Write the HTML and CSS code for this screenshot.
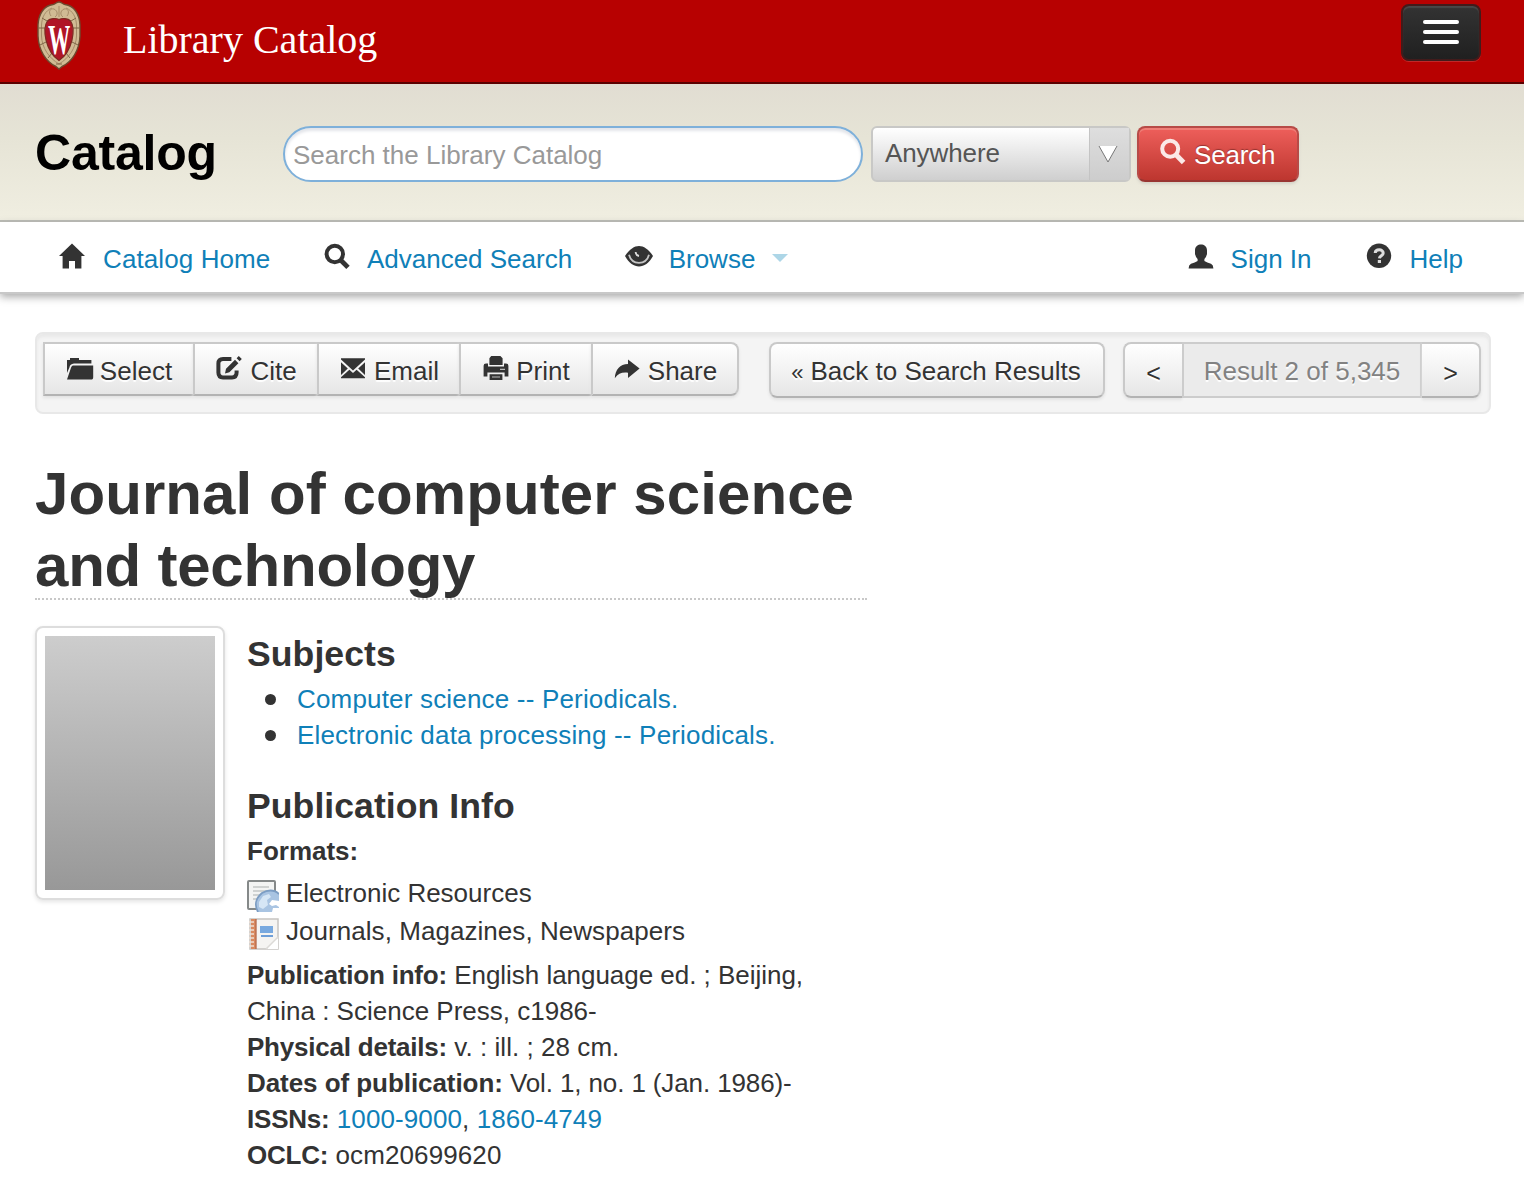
FILE: index.html
```html
<!DOCTYPE html>
<html lang="en">
<head>
<meta charset="utf-8">
<title>Library Catalog</title>
<link rel="stylesheet" href="styles.css">
</head>
<body>
<header class="topbar">
  <svg class="crest" viewBox="0 0 44 70" width="44" height="70">
    <path d="M22 2C24.500 2 25.500 4 28 4.500C37 5.500 42.500 14 43 25V36C42.500 50 35 62 25 66.500L22 69L19 66.500C9 62 1.500 50 1 36V25C1.500 14 7 5.500 16 4.500C18.500 4 19.500 2 22 2Z" fill="#d0bb94" stroke="#6e4a30" stroke-width="1.400"/>
    <path d="M22 6V17M15 8C8 11 5 17 4.500 25V36C5 48 12 58 22 64C32 58 39 48 39.500 36V25C39 17 36 11 29 8M14 16C11 12 13 8 17 9C21 11 21 15 18 17M30 16C33 12 31 8 27 9C23 11 23 15 26 17" fill="none" stroke="#a58c69" stroke-width="1"/>
    <path d="M1.500 28H8M36 28H42.500M3 45L9 42M41 45L35 42M11 58L15 53M33 58L29 53M19 64H25M5 18L10 21M39 18L34 21" stroke="#7d6547" stroke-width="1"/>
    <path d="M22 19.500C25 18 31 18 33.500 21C36.500 25 36.500 33 35 40C33 48 29 56 22 60.500C15 56 11 48 9 40C7.500 33 7.500 25 10.500 21C13 18 19 18 22 19.500Z" fill="#b01526" stroke="#7d2a22" stroke-width="1.200"/>
    <text class="crest-letter" transform="translate(22 53.500) scale(.53 1)" text-anchor="middle">W</text>
  </svg>
  <span class="site-name">Library Catalog</span>
  <button class="menu-button" aria-label="Menu"><i></i><i></i><i></i></button>
</header>

<section class="search-band">
  <h2 class="brand">Catalog</h2>
  <input class="search-input" type="text" placeholder="Search the Library Catalog">
  <div class="field-select"><span class="field-name">Anywhere</span><span class="field-arrow"><svg width="20" height="18" viewBox="0 0 20 18"><path d="M1 1H19L10 17Z" fill="#fff"/><path d="M1 1L10 17L19 1" fill="none" stroke="#777" stroke-width="1"/></svg></span></div>
  <button class="search-button"><svg class="icon" viewBox="0 0 14 14"><circle cx="5.600" cy="5.400" r="4" fill="none" stroke="currentColor" stroke-width="2"/><path d="M8.500 8.400L12.300 12.300" stroke="currentColor" stroke-width="2.500"/></svg><span>Search</span></button>
</section>

<nav class="nav">
  <a class="nav-home"><svg class="icon" viewBox="0 0 14 14"><path d="M7.500 .2L14 6.500H12.200V12.700H9V9H6V12.700H2.800V6.500H1Z" fill="currentColor"/></svg><span>Catalog Home</span></a>
  <a class="nav-advanced"><svg class="icon" viewBox="0 0 14 14"><circle cx="5.900" cy="5.500" r="4.100" fill="none" stroke="currentColor" stroke-width="2"/><path d="M8.800 8.500L12.500 12.200" stroke="currentColor" stroke-width="2.400"/></svg><span>Advanced Search</span></a>
  <a class="nav-browse"><svg class="icon" viewBox="0 0 14 14"><path d="M0 6.500C2.300 3 4.700 1.500 7 1.500S11.700 3 14 6.500C12 10.200 9.500 11.700 7 11.700S2 10.200 0 6.500Z" fill="currentColor"/><path d="M2 5.900C2.700 8.500 4.700 9.900 7 9.900S11.300 8.500 12 5.900" fill="none" stroke="#c4c4c4" stroke-width=".9"/><path d="M5.300 4.500Q5.400 6.200 7 6.500" stroke="#ddd" fill="none" stroke-width=".9"/></svg><span>Browse</span><b class="caret"></b></a>
  <a class="nav-signin"><svg class="icon" viewBox="0 0 14 14"><path d="M4 3.700C4 -.2 10 -.2 10 3.700V5.500Q9.500 7.500 8.700 8V9Q10 9.900 12 10.400Q13.200 11 13.200 12.700H.8Q.8 11 2 10.400Q4 9.900 5.300 9V8Q4.500 7.500 4 5.500Z" fill="currentColor"/></svg><span>Sign In</span></a>
  <a class="nav-help"><svg class="icon" viewBox="0 0 14 14"><circle cx="6.500" cy="6.400" r="6.100" fill="currentColor"/><path d="M4.600 5C4.700 2.900 8.600 2.900 8.600 5C8.600 6.400 6.800 6.300 6.700 7.700" fill="none" stroke="#ddd" stroke-width="1.500"/><rect x="5.900" y="8.500" width="1.600" height="1.500" fill="#ddd"/></svg><span>Help</span></a>
</nav>

<main class="page">
  <div class="toolbar">
    <div class="group actions">
      <button class="btn b-select"><svg class="icon" viewBox="0 0 14 14"><path d="M.5 9V2.500H2V1.500H6.500V2.500H12.700V4.300H4C2.500 4.500 2 5 1.700 6.300ZM.5 12.200L2.500 6.400C2.800 5.500 3.100 5.200 4 5.200H13.600V11C13.600 12 13.300 12.300 12.500 12.300Z" fill="currentColor"/></svg><span>Select</span></button>
      <button class="btn b-cite"><svg class="icon" viewBox="0 0 14 14"><path d="M8.200 2H4Q1.700 2 1.700 4.300V8.800Q1.700 11.200 4 11.200H8.500Q10.800 11.200 10.800 8.800V7.700" fill="none" stroke="currentColor" stroke-width="2"/><path d="M5 9.200L5.500 6.900L10 2.400L11.700 4.100L7.200 8.600ZM10.800 1.600L11.900.5L13.400 2L12.300 3.100Z" fill="currentColor"/></svg><span>Cite</span></button>
      <button class="btn b-email"><svg class="icon" viewBox="0 0 14 14"><path d="M1 1.600H13V2.200L7 7.700L1 2.200ZM1 3.600L4.400 6.700L1 10ZM13 3.600V10L9.600 6.700ZM1 11.600V11.100L5.200 7.400L7 9L8.800 7.400L13 11.100V11.600Z" fill="currentColor"/></svg><span>Email</span></button>
      <button class="btn b-print"><svg class="icon" viewBox="0 0 14 14"><path d="M4.600.5H9.200L10.300 1.600V5H3.700V1.600ZM.8 5.400Q.8 4.300 2 4.300H3V5.700H11V4.300H12Q13.200 4.300 13.200 5.400V10.700H11.300V8.700H2.700V10.700H.8ZM3.800 9.600H10.200V12.500H3.800Z" fill="currentColor"/><path d="M9 7.200H11.500M5 11H9" stroke="#bbb" stroke-width=".6"/></svg><span>Print</span></button>
      <button class="btn b-share"><svg class="icon" viewBox="0 0 14 14"><path d="M7.500 2.200L13.300 6.700L7.500 11.500V8.900C4.500 8.500 2.700 9.300.9 11.600C1.100 7.500 3.500 4.500 7.500 4.500Z" fill="currentColor"/></svg><span>Share</span></button>
    </div>
    <button class="btn b-back"><span><small>«</small> Back to Search Results</span></button>
    <div class="group pager"><button class="btn b-prev">&lt;</button><span class="btn count">Result 2 of 5,345</span><button class="btn b-next">&gt;</button></div>
  </div>

  <h1 class="title">Journal of computer science<br><span>and technology</span></h1>

  <div class="record">
    <div class="cover"><div class="cover-fill"></div></div>
    <div class="details">
      <h3>Subjects</h3>
      <ul class="subjects">
        <li><a>Computer science -- Periodicals.</a></li>
        <li><a>Electronic data processing -- Periodicals.</a></li>
      </ul>
      <h3>Publication Info</h3>
      <div class="formats-label"><b>Formats:</b></div>
      <div class="format">
        <svg width="32" height="32" viewBox="0 0 32 32"><rect x="1" y="1" width="27" height="28" rx="1" fill="#f3f4f3" stroke="#858989" stroke-width="2"/><path d="M6 7H22M6 11H20M6 15H16M6 19H12" stroke="#c3c6c6" stroke-width="1.500"/><path d="M32 14C27 9 20 10 15 13C9 18 7 25 11 32H32Z" fill="#a9c4e2"/><path d="M11 32C7 25 9 18 15 13C20 10 27 9 32 14" fill="none" stroke="#7c9dc3" stroke-width="1.800"/><path d="M12 22L16 16L22 14L24 17L20 20L21 25L16 29L12 27Z" fill="#d6e6f5"/><path d="M25 20L32 21V27L29 25L25 26L22 24ZM26 28H32V32H25Z" fill="#fff"/></svg>
        <span>Electronic Resources</span>
      </div>
      <div class="format format-journal">
        <svg width="32" height="32" viewBox="0 0 32 32"><path d="M3 1H31V31H3Z" fill="#f5f4f2" stroke="#c6c4c1" stroke-width="1.500"/><path d="M4 1H9V31H4Z" fill="#d98a60"/><path d="M9 1V31" stroke="#b5694a" stroke-width="1.300"/><path d="M2 4H7M2 8H7M2 12H7M2 16H7M2 20H7M2 24H7M2 28H7" stroke="#eee0d4" stroke-width="1.500"/><rect x="13" y="8" width="13" height="7" fill="#79a9df"/><path d="M14 18H26" stroke="#6f9fd8" stroke-width="2"/><path d="M20 31L31 20V31Z" fill="#fff"/><path d="M19 31L31 19" stroke="#dcdad7" stroke-width="1.500"/></svg>
        <span>Journals, Magazines, Newspapers</span>
      </div>
      <div class="facts">
        <div><b>Publication info:</b> <span class="edition">English language ed. ; Beijing,</span><br>China : Science Press, c1986-</div>
        <div><b>Physical details:</b> <span class="extent">v. : ill. ; 28 cm.</span></div>
        <div class="dates"><b>Dates of publication:</b> Vol. 1, no. 1 (Jan. 1986)-</div>
        <div class="numbers"><b>ISSNs:</b> <a>1000-9000</a>, <a>1860-4749</a></div>
        <div class="numbers"><b>OCLC:</b> ocm20699620</div>
      </div>
    </div>
  </div>
</main>
</body>
</html>
```
FILE: styles.css
```css
* { box-sizing: border-box; }
html, body { margin: 0; height: 1183px; overflow: hidden; }
body { background: #fff; color: #333; font: 26px/36px "Liberation Sans", Arial, sans-serif; }
button, input { font: inherit; color: inherit; margin: 0; }
a { color: #0f80b8; }
.icon { width: 28px; height: 28px; flex: none; color: #333; overflow: visible; }

.topbar { display: flex; align-items: flex-start; height: 84px; padding: 0 43px 0 37px; background: #b70101; border-bottom: 2px solid #5b0000; }
.crest { flex: none; }
.crest-letter { font: bold 42px "Liberation Serif", serif; fill: #fff; }
.site-name { margin: 16px auto 0 42px; font: 40px/48px "Liberation Serif", "Times New Roman", serif; color: #fff; }
.menu-button { display: flex; flex-direction: column; align-items: center; gap: 6px; width: 80px; height: 57px; margin-top: 4px; padding: 14px 0 0; border: 2px solid #421b1b; border-radius: 8px; background: linear-gradient(#333, #202020); box-shadow: inset 0 2px 1px #484848, 0 1px 0 #c02828; }
.menu-button i { width: 36px; height: 4px; border-radius: 2px; background: #fff; }

.search-band { display: flex; align-items: flex-start; height: 138px; padding: 42px 35px 0; background: linear-gradient(#e1ddd2, #e6e4d6 40%, #f0eee1); border-bottom: 2px solid #b9bab3; }
.brand { width: 248px; margin: -3px 0 0; color: #000; font: bold 50px/60px "Liberation Sans", Arial, sans-serif; letter-spacing: -.2px; }
.search-input { width: 580px; height: 56px; padding: 2px 8px 0; border: 2px solid #7eb0da; border-radius: 28px; background: #fff; box-shadow: inset 0 3px 3px #e3e5ea; outline: 0; }
.search-input::placeholder { color: #999; opacity: 1; }
.field-select { display: flex; width: 260px; height: 56px; margin-left: 8px; border: 2px solid #c8c8c6; border-radius: 6px; background: linear-gradient(#fff, #cfcfcf); color: #555; }
.field-name { flex: 1; padding: 7px 0 0 12px; letter-spacing: -.1px; }
.field-arrow { display: flex; align-items: center; justify-content: center; width: 40px; padding-right: 4px; border-left: 1px solid #c4c4c4; background: linear-gradient(#dedede, #cdcdcd); }
.search-button { display: flex; align-items: flex-start; width: 162px; height: 56px; margin-left: 6px; padding: 9px 0 0 20px; border: 2px solid #b74b47; border-bottom-color: #993532; border-radius: 8px; color: #fff; background: linear-gradient(#ee5f5b, #bd362f); box-shadow: inset 0 2px 0 #ef7e77, 0 2px 3px #d5d3c8; text-shadow: 0 -1px 1px #943330; letter-spacing: -.2px; }
.search-button .icon { color: #fbe9e7; margin: 1px 7px 0 0; }

.nav { display: flex; height: 72px; padding: 19px 61px 0 57px; background: #fff; border-bottom: 2px solid #c8c8c8; box-shadow: 0 3px 8px #aaa; }
.nav a { display: flex; height: 36px; }
.nav a .icon { margin: 2px 16px 0 0; }
.nav a.nav-home .icon { margin-right: 18px; }
.nav-home span { letter-spacing: .1px; }
.nav-advanced { margin-left: 52.5px; }
.nav-browse { margin-left: 52.5px; }
.caret { width: 0; height: 0; margin: 13px 0 0 17px; border: 8px solid transparent; border-top-color: #add6e7; border-bottom: 0; }
.nav-signin { margin-left: auto; }
.nav-help { margin-left: 54px; }

.page { padding: 38px 33px 0 35px; }
.toolbar { display: flex; align-items: flex-start; height: 82px; padding: 8px 8px 0 6px; border: 2px solid #e8e8e8; border-radius: 8px; background: #f4f4f4; box-shadow: inset 0 3px 3px #e9e9e9; }
.group { display: flex; }
.btn { display: flex; justify-content: center; height: 56px; padding: 9px 0 0; border: 2px solid #c9c9c9; border-bottom-color: #b3b3b3; border-radius: 8px; background: linear-gradient(#fff, #e6e6e6); box-shadow: 0 2px 3px #e2e2e2; text-shadow: 0 2px 1px #fff; white-space: nowrap; }
.btn .icon { margin: 2px 6px 0 0; }
.actions .btn { height: 54px; border-radius: 0; border-right-width: 0; }
.actions .btn:last-child { border-right-width: 2px; border-radius: 0 8px 8px 0; }
.b-select { width: 150px; }
.b-cite { width: 124px; }
.b-cite .icon { margin-right: 7px; }
.b-email { width: 142px; }
.b-email .icon { margin-right: 7px; }
.b-print { width: 132px; }
.b-share { width: 148px; }
.b-share .icon { margin-right: 7px; }
.b-back { width: 336px; margin-left: 30px; padding-right: 2px; }
.b-back small { display: inline-block; width: 12px; font-size: 22px; }
.pager { margin-left: 18px; }
.b-prev { width: 59px; border-right: 0; border-radius: 8px 0 0 8px; }
.count { width: 240px; border-radius: 0; border-color: #ccc; background: #ebebeb; color: #828282; box-shadow: none; }
.b-next { width: 59px; border-left: 0; border-radius: 0 8px 8px 0; }
.b-prev, .b-next { padding-top: 11px; font-size: 25px; }

.title { width: 832px; margin: 44px 0 26px; border-bottom: 2px dotted #c8c8c8; font-size: 60px; line-height: 72px; font-weight: bold; height: 142px; white-space: nowrap; letter-spacing: .08px; }
.title span { letter-spacing: -.22px; }
.record { display: flex; align-items: flex-start; gap: 22px; }
.cover { width: 190px; height: 274px; padding: 8px; border: 2px solid #ddd; border-radius: 8px; box-shadow: 0 2px 4px #e5e5e5; }
.cover-fill { height: 254px; background: linear-gradient(#cdcdcd, #989898); }
.details h3 { margin: 8px 0 7px; height: 40px; font-size: 35.6px; line-height: 40px; letter-spacing: .06px; }
.subjects { margin: 0 0 33px; padding: 0 0 0 18px; list-style: none; letter-spacing: .18px; }
.subjects li { display: flex; align-items: center; gap: 21px; }
.subjects li::before { content: ""; width: 11px; height: 11px; border-radius: 50%; background: #333; }
.formats-label { height: 42px; }
.format { display: flex; gap: 7px; height: 38px; white-space: nowrap; }
.format svg { margin-top: 5px; flex: none; }
.format-journal { letter-spacing: .05px; }
.facts { margin-top: 6px; white-space: nowrap; }
.facts b { letter-spacing: -.22px; }
.facts .edition { letter-spacing: -.03px; }
.facts .extent { letter-spacing: .05px; }
.facts .dates { letter-spacing: -.12px; }
.facts .dates b { letter-spacing: -.06px; }
.facts .numbers { letter-spacing: .1px; }
```
